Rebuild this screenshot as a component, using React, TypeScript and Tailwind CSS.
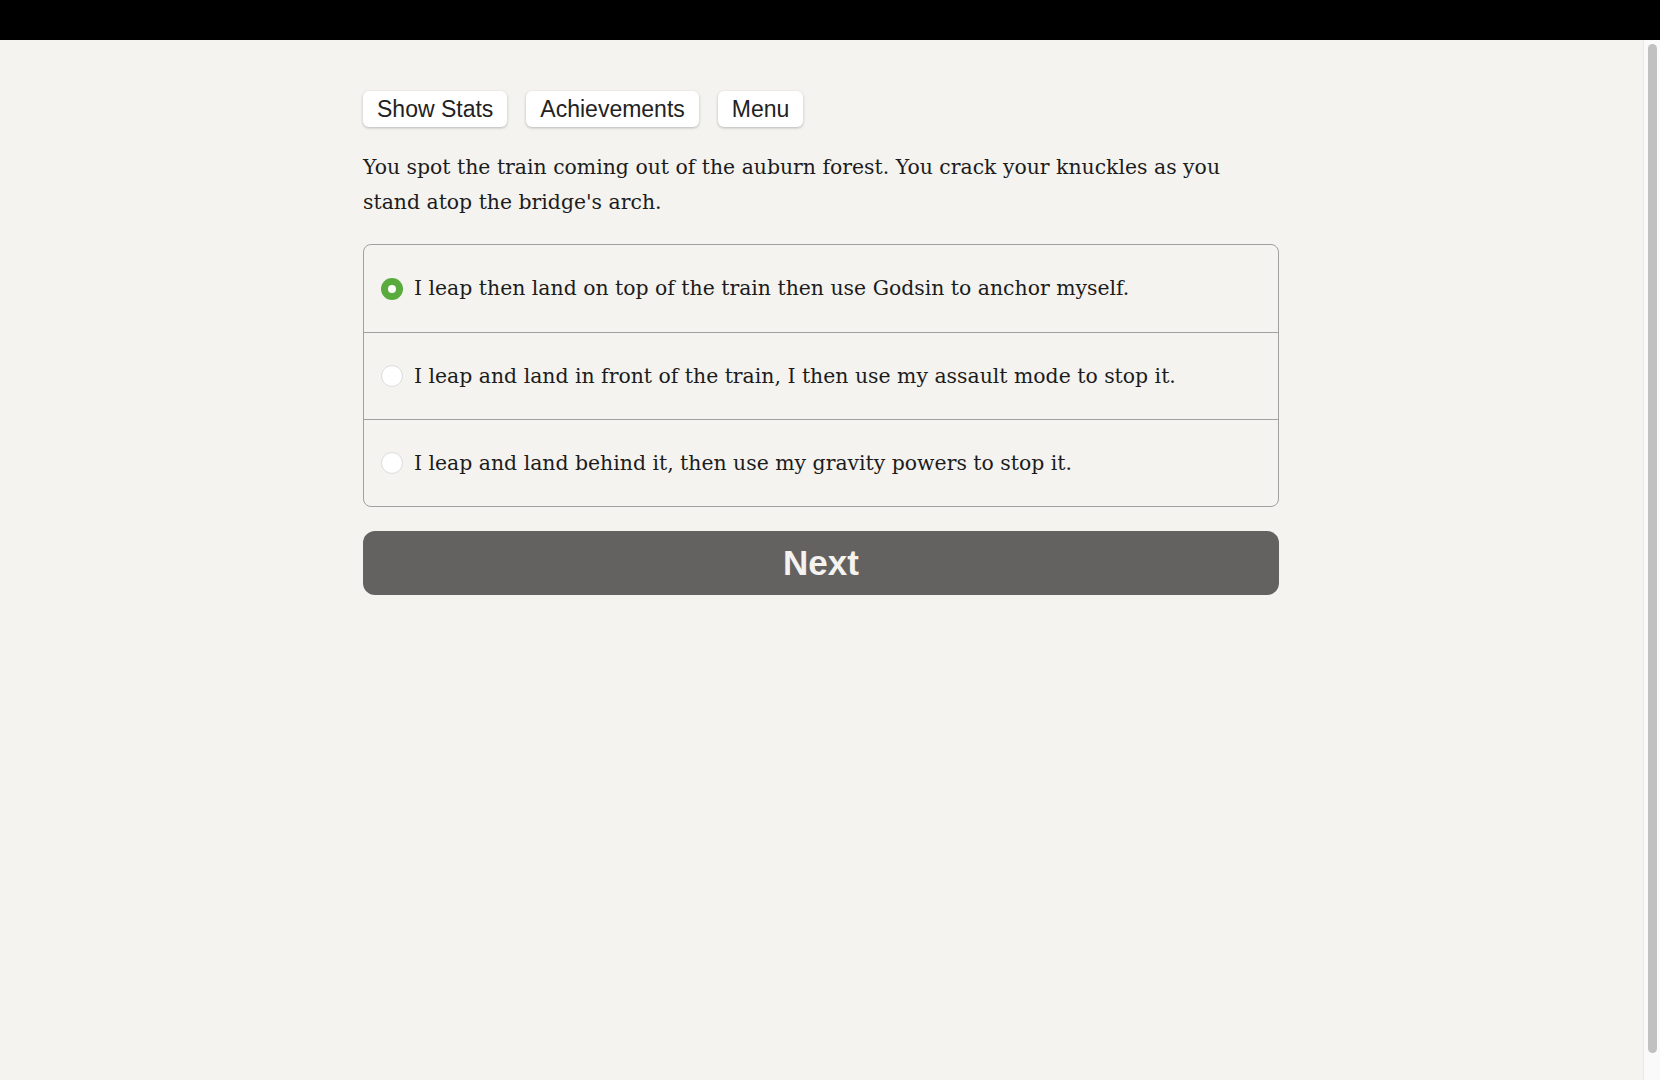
import { useState } from 'react';

const choices = [
  'I leap then land on top of the train then use Godsin to anchor myself.',
  'I leap and land in front of the train, I then use my assault mode to stop it.',
  'I leap and land behind it, then use my gravity powers to stop it.',
];

function App() {
  const [picked, setPicked] = useState(0);

  return (
    <div className="min-h-screen bg-[#f4f3ef] flex flex-col">
      {/* top bar */}
      <div className="h-[40px] bg-black shrink-0" />

      <main className="pl-[363px] pr-[381px] pt-[51px]">
        {/* top buttons */}
        <div className="flex gap-[19px] font-['Liberation_Sans',Arial,sans-serif]">
          <button className="h-[36px] px-[14px] bg-white rounded-[6px] shadow-[0_1px_3px_rgba(0,0,0,0.25)] text-[23px] text-[#222]">
            Show Stats
          </button>
          <button className="h-[36px] px-[14px] bg-white rounded-[6px] shadow-[0_1px_3px_rgba(0,0,0,0.25)] text-[23px] text-[#222]">
            Achievements
          </button>
          <button className="h-[36px] px-[14px] bg-white rounded-[6px] shadow-[0_1px_3px_rgba(0,0,0,0.25)] text-[23px] text-[#222]">
            Menu
          </button>
        </div>

        {/* story text */}
        <p className="mt-[23px] font-['DejaVu_Serif',serif] text-[20.4px] leading-[35px] text-[#1c1c1c]">
          You spot the train coming out of the auburn forest. You crack your knuckles as you
          stand atop the bridge's arch.
        </p>

        {/* choices */}
        <div className="mt-[24px] border border-[#a0a0a0] rounded-[8px] overflow-hidden">
          {choices.map((c, i) => (
            <label
              key={i}
              onClick={() => setPicked(i)}
              className={
                'h-[87px] flex items-center pl-[17px] cursor-pointer ' +
                (i > 0 ? 'border-t border-[#a0a0a0]' : '')
              }
            >
              {picked === i ? (
                <span className="w-[22px] h-[22px] rounded-full bg-[#5aab3e] flex items-center justify-center shrink-0">
                  <span className="w-[8px] h-[8px] rounded-full bg-white" />
                </span>
              ) : (
                <span className="w-[22px] h-[22px] rounded-full bg-white border border-[#dcdcdc] shrink-0" />
              )}
              <span className="ml-[11px] font-['DejaVu_Serif',serif] text-[20.4px] text-[#1c1c1c]">
                {c}
              </span>
            </label>
          ))}
        </div>

        {/* next */}
        <button className="mt-[24px] w-full h-[64px] rounded-[12px] bg-[#636261] text-[#f4f3ef] font-['Liberation_Sans',Arial,sans-serif] font-bold text-[35px]">
          Next
        </button>
      </main>

      {/* scrollbar */}
      <div className="fixed top-[40px] right-0 bottom-0 w-[17px] bg-[#fafafa] border-l border-[#e8e8e8]">
        <div className="mx-auto mt-[4px] w-[9px] h-[1009px] rounded-full bg-[#c1c1c1]" />
      </div>
    </div>
  );
}

export default App;
